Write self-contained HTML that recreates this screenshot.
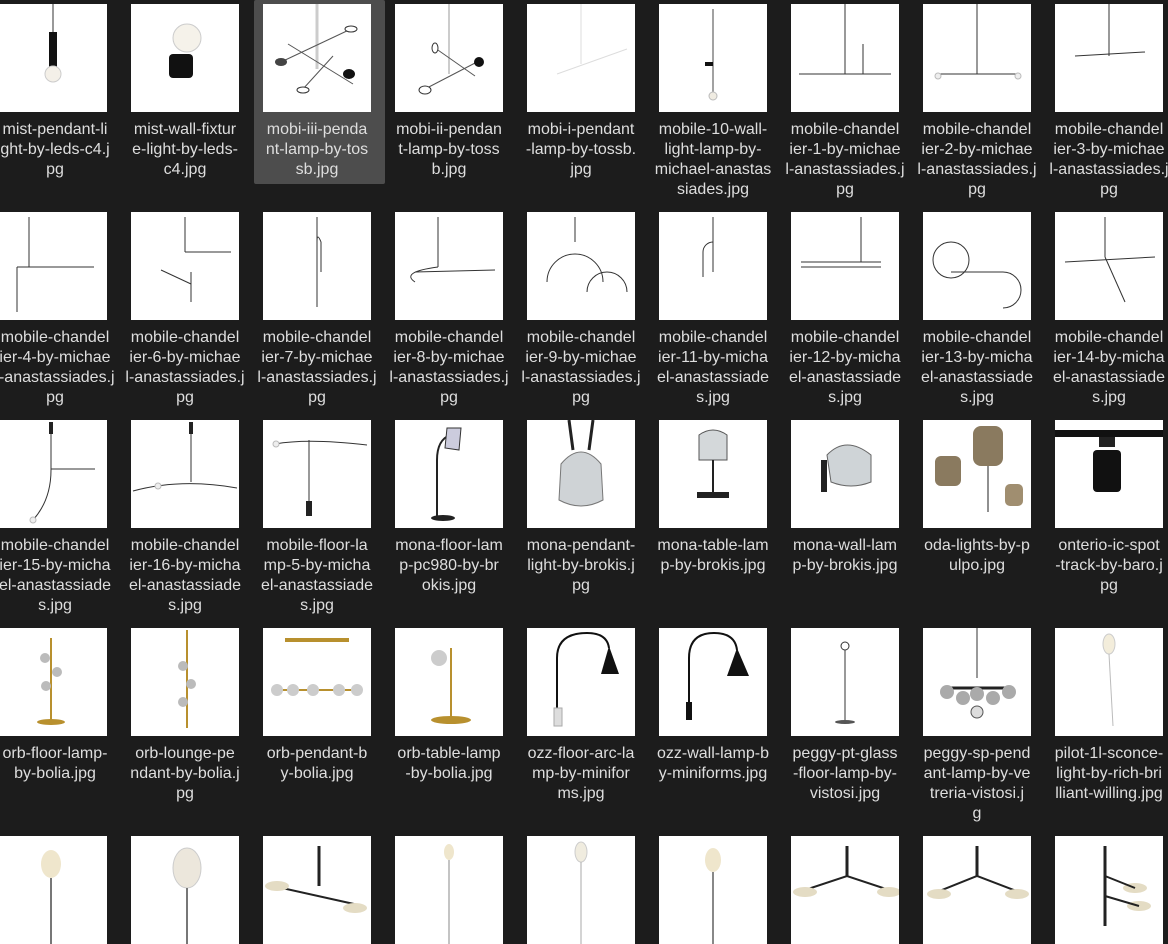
<!DOCTYPE html>
<html><head><meta charset="utf-8"><style>
body{margin:0;width:1168px;height:911px;background:#1c1c1c;overflow:hidden;position:relative;font-family:"Liberation Sans","Noto Sans CJK SC",sans-serif}
.t{position:absolute;width:108px;height:108px;background:#fff}
.t svg{width:108px;height:108px;display:block}
.l{position:absolute;width:132px;text-align:center;color:#dedede;font-size:16px;line-height:20px;white-space:nowrap}
.sel{position:absolute;left:254px;top:0;width:131px;height:184px;background:#4d4d4d;border-radius:2px}
</style></head><body>
<div class="sel"></div>
<!-- row 0 -->
<div class="t" style="left:-1px;top:4px"><svg><line x1="54" y1="0" x2="54" y2="30" stroke="#333"/><rect x="50" y="28" width="8" height="36" fill="#111"/><circle cx="54" cy="70" r="8" fill="#f4f0e8" stroke="#ccc"/></svg></div>
<div class="t" style="left:131px;top:4px"><svg><circle cx="56" cy="34" r="14" fill="#f5f2ea" stroke="#ccc"/><rect x="38" y="50" width="24" height="24" rx="4" fill="#111"/></svg></div>
<div class="t" style="left:263px;top:4px"><svg><line x1="54" y1="0" x2="54" y2="65" stroke="#ccc" stroke-width="3"/><line x1="25" y1="40" x2="90" y2="80" stroke="#555"/><line x1="18" y1="58" x2="88" y2="25" stroke="#555"/><line x1="40" y1="85" x2="70" y2="52" stroke="#555"/><ellipse cx="88" cy="25" rx="6" ry="3" fill="#fff" stroke="#333"/><ellipse cx="18" cy="58" rx="6" ry="4" fill="#444"/><ellipse cx="86" cy="70" rx="6" ry="5" fill="#111"/><ellipse cx="40" cy="86" rx="6" ry="3" fill="#fff" stroke="#333"/></svg></div>
<div class="t" style="left:395px;top:4px"><svg><line x1="54" y1="0" x2="54" y2="70" stroke="#ccc" stroke-width="2"/><line x1="40" y1="44" x2="80" y2="72" stroke="#555"/><line x1="30" y1="85" x2="82" y2="58" stroke="#555"/><ellipse cx="84" cy="58" rx="5" ry="5" fill="#111"/><ellipse cx="30" cy="86" rx="6" ry="4" fill="#fff" stroke="#333"/><ellipse cx="40" cy="44" rx="3" ry="5" fill="#fff" stroke="#333"/></svg></div>
<div class="t" style="left:527px;top:4px"><svg><line x1="54" y1="0" x2="54" y2="60" stroke="#ddd"/><line x1="30" y1="70" x2="100" y2="45" stroke="#ddd"/></svg></div>
<div class="t" style="left:659px;top:4px"><svg><line x1="54" y1="5" x2="54" y2="90" stroke="#444"/><circle cx="54" cy="92" r="4" fill="#f0ece2" stroke="#bbb"/><rect x="46" y="58" width="8" height="4" fill="#111"/></svg></div>
<div class="t" style="left:791px;top:4px"><svg><line x1="54" y1="0" x2="54" y2="70" stroke="#333"/><line x1="8" y1="70" x2="100" y2="70" stroke="#333"/><line x1="72" y1="40" x2="72" y2="70" stroke="#333"/></svg></div>
<div class="t" style="left:923px;top:4px"><svg><line x1="54" y1="0" x2="54" y2="70" stroke="#333"/><line x1="15" y1="70" x2="95" y2="70" stroke="#333"/><circle cx="15" cy="72" r="3" fill="#eee" stroke="#bbb"/><circle cx="95" cy="72" r="3" fill="#eee" stroke="#bbb"/></svg></div>
<div class="t" style="left:1055px;top:4px"><svg><line x1="54" y1="0" x2="54" y2="52" stroke="#333"/><line x1="20" y1="52" x2="90" y2="48" stroke="#333"/></svg></div>
<div class="l" style="left:-11px;top:120px">mist-pendant-li<br>ght-by-leds-c4.j<br>pg</div>
<div class="l" style="left:119px;top:120px">mist-wall-fixtur<br>e-light-by-leds-<br>c4.jpg</div>
<div class="l" style="left:251px;top:120px">mobi-iii-penda<br>nt-lamp-by-tos<br>sb.jpg</div>
<div class="l" style="left:383px;top:120px">mobi-ii-pendan<br>t-lamp-by-toss<br>b.jpg</div>
<div class="l" style="left:515px;top:120px">mobi-i-pendant<br>-lamp-by-tossb.<br>jpg</div>
<div class="l" style="left:647px;top:120px">mobile-10-wall-<br>light-lamp-by-<br>michael-anastas<br>siades.jpg</div>
<div class="l" style="left:779px;top:120px">mobile-chandel<br>ier-1-by-michae<br>l-anastassiades.j<br>pg</div>
<div class="l" style="left:911px;top:120px">mobile-chandel<br>ier-2-by-michae<br>l-anastassiades.j<br>pg</div>
<div class="l" style="left:1043px;top:120px">mobile-chandel<br>ier-3-by-michae<br>l-anastassiades.j<br>pg</div>
<!-- row 1 -->
<div class="t" style="left:-1px;top:212px"><svg><line x1="30" y1="5" x2="30" y2="55" stroke="#333"/><line x1="18" y1="55" x2="95" y2="55" stroke="#333"/><line x1="18" y1="55" x2="18" y2="100" stroke="#333"/></svg></div>
<div class="t" style="left:131px;top:212px"><svg><line x1="54" y1="5" x2="54" y2="40" stroke="#333"/><line x1="54" y1="40" x2="100" y2="40" stroke="#333"/><line x1="30" y1="58" x2="60" y2="72" stroke="#333"/><line x1="60" y1="60" x2="60" y2="90" stroke="#333"/></svg></div>
<div class="t" style="left:263px;top:212px"><svg><line x1="54" y1="5" x2="54" y2="95" stroke="#333"/><path d="M54 30 Q54 20 58 30 L58 60" fill="none" stroke="#333"/></svg></div>
<div class="t" style="left:395px;top:212px"><svg><line x1="43" y1="5" x2="43" y2="55" stroke="#333"/><path d="M43 55 Q5 60 20 70" fill="none" stroke="#333"/><line x1="20" y1="60" x2="100" y2="58" stroke="#333"/></svg></div>
<div class="t" style="left:527px;top:212px"><svg><line x1="48" y1="5" x2="48" y2="30" stroke="#333"/><path d="M20 70 A28 28 0 0 1 76 70" fill="none" stroke="#333"/><path d="M60 80 A20 20 0 0 1 100 80" fill="none" stroke="#333"/></svg></div>
<div class="t" style="left:659px;top:212px"><svg><line x1="54" y1="5" x2="54" y2="60" stroke="#333"/><path d="M54 30 A10 10 0 0 0 44 40 L44 65" fill="none" stroke="#333"/></svg></div>
<div class="t" style="left:791px;top:212px"><svg><line x1="70" y1="5" x2="70" y2="50" stroke="#333"/><line x1="10" y1="50" x2="90" y2="50" stroke="#333"/><line x1="10" y1="55" x2="90" y2="55" stroke="#333"/></svg></div>
<div class="t" style="left:923px;top:212px"><svg><circle cx="28" cy="48" r="18" fill="none" stroke="#333"/><path d="M28 60 L80 60 A18 18 0 0 1 80 96" fill="none" stroke="#333"/></svg></div>
<div class="t" style="left:1055px;top:212px"><svg><line x1="50" y1="5" x2="50" y2="45" stroke="#333"/><line x1="10" y1="50" x2="100" y2="45" stroke="#333"/><line x1="50" y1="45" x2="70" y2="90" stroke="#333"/></svg></div>
<div class="l" style="left:-11px;top:328px">mobile-chandel<br>ier-4-by-michae<br>l-anastassiades.j<br>pg</div>
<div class="l" style="left:119px;top:328px">mobile-chandel<br>ier-6-by-michae<br>l-anastassiades.j<br>pg</div>
<div class="l" style="left:251px;top:328px">mobile-chandel<br>ier-7-by-michae<br>l-anastassiades.j<br>pg</div>
<div class="l" style="left:383px;top:328px">mobile-chandel<br>ier-8-by-michae<br>l-anastassiades.j<br>pg</div>
<div class="l" style="left:515px;top:328px">mobile-chandel<br>ier-9-by-michae<br>l-anastassiades.j<br>pg</div>
<div class="l" style="left:647px;top:328px">mobile-chandel<br>ier-11-by-micha<br>el-anastassiade<br>s.jpg</div>
<div class="l" style="left:779px;top:328px">mobile-chandel<br>ier-12-by-micha<br>el-anastassiade<br>s.jpg</div>
<div class="l" style="left:911px;top:328px">mobile-chandel<br>ier-13-by-micha<br>el-anastassiade<br>s.jpg</div>
<div class="l" style="left:1043px;top:328px">mobile-chandel<br>ier-14-by-micha<br>el-anastassiade<br>s.jpg</div>
<!-- row 2 -->
<div class="t" style="left:-1px;top:420px"><svg><rect x="50" y="2" width="4" height="12" fill="#222"/><line x1="52" y1="14" x2="52" y2="50" stroke="#333"/><line x1="52" y1="49" x2="96" y2="49" stroke="#333"/><path d="M52 50 Q52 80 34 100" fill="none" stroke="#333"/><circle cx="34" cy="100" r="3" fill="#eee" stroke="#bbb"/></svg></div>
<div class="t" style="left:131px;top:420px"><svg><rect x="58" y="2" width="4" height="12" fill="#222"/><line x1="60" y1="14" x2="60" y2="62" stroke="#333"/><path d="M2 71 Q50 58 106 68" fill="none" stroke="#333"/><circle cx="27" cy="66" r="3" fill="#eee" stroke="#bbb"/></svg></div>
<div class="t" style="left:263px;top:420px"><svg><path d="M12 24 Q45 18 104 25" fill="none" stroke="#333"/><circle cx="13" cy="24" r="3" fill="#eee" stroke="#bbb"/><line x1="46" y1="20" x2="46" y2="82" stroke="#333"/><rect x="43" y="81" width="6" height="15" fill="#222"/></svg></div>
<div class="t" style="left:395px;top:420px"><svg><path d="M42 100 L42 40 Q42 20 55 15" fill="none" stroke="#222" stroke-width="2"/><path d="M52 8 L66 8 L64 30 L50 28Z" fill="#ccd" stroke="#333"/><ellipse cx="48" cy="98" rx="12" ry="3" fill="#222"/></svg></div>
<div class="t" style="left:527px;top:420px"><svg><path d="M42 0 L46 30 M66 0 L62 30" stroke="#222" stroke-width="3"/><path d="M34 44 Q54 20 74 44 L76 80 Q54 92 32 80Z" fill="#cfd3d6" stroke="#777"/></svg></div>
<div class="t" style="left:659px;top:420px"><svg><path d="M40 15 Q54 5 68 15 L68 40 L40 40Z" fill="#d4d8da" stroke="#555"/><line x1="54" y1="40" x2="54" y2="72" stroke="#222" stroke-width="2"/><rect x="38" y="72" width="32" height="6" fill="#222"/></svg></div>
<div class="t" style="left:791px;top:420px"><svg><rect x="30" y="40" width="6" height="32" fill="#222"/><path d="M36 35 Q55 15 80 35 L80 62 Q60 70 40 62Z" fill="#cfd4d7" stroke="#666"/></svg></div>
<div class="t" style="left:923px;top:420px"><svg><rect x="12" y="36" width="26" height="30" rx="6" fill="#8a7a5f"/><rect x="50" y="6" width="30" height="40" rx="8" fill="#8a7a5f"/><line x1="65" y1="46" x2="65" y2="92" stroke="#222"/><rect x="82" y="64" width="18" height="22" rx="5" fill="#a08e70"/></svg></div>
<div class="t" style="left:1055px;top:420px"><svg><rect x="0" y="10" width="108" height="7" fill="#111"/><rect x="44" y="17" width="16" height="10" fill="#222"/><rect x="38" y="30" width="28" height="42" rx="4" fill="#111"/></svg></div>
<div class="l" style="left:-11px;top:536px">mobile-chandel<br>ier-15-by-micha<br>el-anastassiade<br>s.jpg</div>
<div class="l" style="left:119px;top:536px">mobile-chandel<br>ier-16-by-micha<br>el-anastassiade<br>s.jpg</div>
<div class="l" style="left:251px;top:536px">mobile-floor-la<br>mp-5-by-micha<br>el-anastassiade<br>s.jpg</div>
<div class="l" style="left:383px;top:536px">mona-floor-lam<br>p-pc980-by-br<br>okis.jpg</div>
<div class="l" style="left:515px;top:536px">mona-pendant-<br>light-by-brokis.j<br>pg</div>
<div class="l" style="left:647px;top:536px">mona-table-lam<br>p-by-brokis.jpg</div>
<div class="l" style="left:779px;top:536px">mona-wall-lam<br>p-by-brokis.jpg</div>
<div class="l" style="left:911px;top:536px">oda-lights-by-p<br>ulpo.jpg</div>
<div class="l" style="left:1043px;top:536px">onterio-ic-spot<br>-track-by-baro.j<br>pg</div>
<!-- row 3 -->
<div class="t" style="left:-1px;top:628px"><svg><line x1="52" y1="10" x2="52" y2="92" stroke="#b8902e" stroke-width="2"/><circle cx="46" cy="30" r="5" fill="#bbb"/><circle cx="58" cy="44" r="5" fill="#bbb"/><circle cx="47" cy="58" r="5" fill="#bbb"/><ellipse cx="52" cy="94" rx="14" ry="3" fill="#b8902e"/></svg></div>
<div class="t" style="left:131px;top:628px"><svg><line x1="56" y1="2" x2="56" y2="100" stroke="#b8902e" stroke-width="2"/><circle cx="52" cy="38" r="5" fill="#bbb"/><circle cx="60" cy="56" r="5" fill="#bbb"/><circle cx="52" cy="74" r="5" fill="#bbb"/></svg></div>
<div class="t" style="left:263px;top:628px"><svg><rect x="22" y="10" width="64" height="4" fill="#b8902e"/><line x1="10" y1="62" x2="98" y2="62" stroke="#b8902e" stroke-width="2"/><circle cx="14" cy="62" r="6" fill="#ccc"/><circle cx="30" cy="62" r="6" fill="#ccc"/><circle cx="50" cy="62" r="6" fill="#ccc"/><circle cx="76" cy="62" r="6" fill="#ccc"/><circle cx="94" cy="62" r="6" fill="#ccc"/></svg></div>
<div class="t" style="left:395px;top:628px"><svg><circle cx="44" cy="30" r="8" fill="#ccc"/><line x1="56" y1="20" x2="56" y2="90" stroke="#b8902e" stroke-width="2"/><ellipse cx="56" cy="92" rx="20" ry="4" fill="#b8902e"/></svg></div>
<div class="t" style="left:527px;top:628px"><svg><path d="M30 80 L30 30 Q30 5 60 5 Q80 5 82 20" fill="none" stroke="#111" stroke-width="2"/><path d="M82 18 L74 46 L92 46Z" fill="#111"/><rect x="27" y="80" width="8" height="18" fill="#ddd" stroke="#aaa"/></svg></div>
<div class="t" style="left:659px;top:628px"><svg><path d="M30 80 L30 30 Q30 5 55 5 Q76 5 78 22" fill="none" stroke="#111" stroke-width="2"/><path d="M78 20 L68 48 L90 48Z" fill="#111"/><rect x="27" y="74" width="6" height="18" fill="#111"/></svg></div>
<div class="t" style="left:791px;top:628px"><svg><circle cx="54" cy="18" r="4" fill="#fff" stroke="#333"/><line x1="54" y1="22" x2="54" y2="92" stroke="#333"/><ellipse cx="54" cy="94" rx="10" ry="2" fill="#555"/></svg></div>
<div class="t" style="left:923px;top:628px"><svg><line x1="54" y1="0" x2="54" y2="50" stroke="#333"/><line x1="20" y1="60" x2="90" y2="60" stroke="#222" stroke-width="3"/><circle cx="24" cy="64" r="7" fill="#aaa"/><circle cx="40" cy="70" r="7" fill="#aaa"/><circle cx="54" cy="66" r="7" fill="#aaa"/><circle cx="70" cy="70" r="7" fill="#aaa"/><circle cx="86" cy="64" r="7" fill="#aaa"/><circle cx="54" cy="84" r="6" fill="#ddd" stroke="#555"/></svg></div>
<div class="t" style="left:1055px;top:628px"><svg><ellipse cx="54" cy="16" rx="6" ry="10" fill="#f3eddb" stroke="#ccc"/><line x1="54" y1="26" x2="58" y2="98" stroke="#bbb"/></svg></div>
<div class="l" style="left:-11px;top:744px">orb-floor-lamp-<br>by-bolia.jpg</div>
<div class="l" style="left:119px;top:744px">orb-lounge-pe<br>ndant-by-bolia.j<br>pg</div>
<div class="l" style="left:251px;top:744px">orb-pendant-b<br>y-bolia.jpg</div>
<div class="l" style="left:383px;top:744px">orb-table-lamp<br>-by-bolia.jpg</div>
<div class="l" style="left:515px;top:744px">ozz-floor-arc-la<br>mp-by-minifor<br>ms.jpg</div>
<div class="l" style="left:647px;top:744px">ozz-wall-lamp-b<br>y-miniforms.jpg</div>
<div class="l" style="left:779px;top:744px">peggy-pt-glass<br>-floor-lamp-by-<br>vistosi.jpg</div>
<div class="l" style="left:911px;top:744px">peggy-sp-pend<br>ant-lamp-by-ve<br>treria-vistosi.j<br>g</div>
<div class="l" style="left:1043px;top:744px">pilot-1l-sconce-<br>light-by-rich-bri<br>lliant-willing.jpg</div>
<!-- row 4 -->
<div class="t" style="left:-1px;top:836px"><svg><ellipse cx="52" cy="28" rx="10" ry="14" fill="#efe6cc"/><line x1="52" y1="42" x2="52" y2="108" stroke="#777" stroke-width="2"/></svg></div>
<div class="t" style="left:131px;top:836px"><svg><ellipse cx="56" cy="32" rx="14" ry="20" fill="#ece7dc" stroke="#ccc"/><line x1="56" y1="52" x2="56" y2="108" stroke="#777" stroke-width="2"/></svg></div>
<div class="t" style="left:263px;top:836px"><svg><line x1="56" y1="10" x2="56" y2="50" stroke="#222" stroke-width="3"/><path d="M10 50 L100 70" stroke="#222" stroke-width="2"/><ellipse cx="14" cy="50" rx="12" ry="5" fill="#e4dcc4"/><ellipse cx="92" cy="72" rx="12" ry="5" fill="#e4dcc4"/></svg></div>
<div class="t" style="left:395px;top:836px"><svg><ellipse cx="54" cy="16" rx="5" ry="8" fill="#efe6cc"/><line x1="54" y1="24" x2="54" y2="108" stroke="#888"/></svg></div>
<div class="t" style="left:527px;top:836px"><svg><ellipse cx="54" cy="16" rx="6" ry="10" fill="#f0ecdf" stroke="#ccc"/><line x1="54" y1="26" x2="54" y2="108" stroke="#aaa"/></svg></div>
<div class="t" style="left:659px;top:836px"><svg><ellipse cx="54" cy="24" rx="8" ry="12" fill="#efe6cc"/><line x1="54" y1="36" x2="54" y2="108" stroke="#888" stroke-width="2"/></svg></div>
<div class="t" style="left:791px;top:836px"><svg><line x1="56" y1="10" x2="56" y2="40" stroke="#222" stroke-width="3"/><path d="M14 54 L56 40 L98 54" fill="none" stroke="#222" stroke-width="2"/><ellipse cx="14" cy="56" rx="12" ry="5" fill="#e4dcc4"/><ellipse cx="98" cy="56" rx="12" ry="5" fill="#e4dcc4"/></svg></div>
<div class="t" style="left:923px;top:836px"><svg><line x1="54" y1="10" x2="54" y2="40" stroke="#222" stroke-width="3"/><path d="M14 56 L54 40 L96 56" fill="none" stroke="#222" stroke-width="2"/><ellipse cx="16" cy="58" rx="12" ry="5" fill="#e4dcc4"/><ellipse cx="94" cy="58" rx="12" ry="5" fill="#e4dcc4"/></svg></div>
<div class="t" style="left:1055px;top:836px"><svg><line x1="50" y1="10" x2="50" y2="90" stroke="#222" stroke-width="3"/><ellipse cx="80" cy="52" rx="12" ry="5" fill="#e4dcc4"/><ellipse cx="84" cy="70" rx="12" ry="5" fill="#e4dcc4"/><path d="M50 40 L80 52 M50 60 L84 70" stroke="#222" stroke-width="2"/></svg></div>
</body></html>
